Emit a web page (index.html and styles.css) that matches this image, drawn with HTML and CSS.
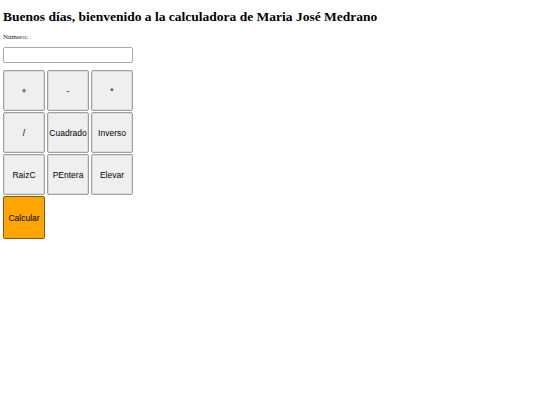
FILE: index.html
```html
<!DOCTYPE html>
<html lang="es">
<head>
<meta charset="utf-8">
<title>Calculadora</title>
<link rel="stylesheet" href="styles.css">
</head>
<body>
<h1 class="title">Buenos días, bienvenido a la calculadora de Maria José Medrano</h1>
<form class="calc">
  <label class="label" for="numero">Número:</label>
  <input class="input" id="numero" type="text">
  <div class="keys">
    <button type="button" class="key">+</button>
    <button type="button" class="key">-</button>
    <button type="button" class="key">*</button>
    <button type="button" class="key">/</button>
    <button type="button" class="key">Cuadrado</button>
    <button type="button" class="key">Inverso</button>
    <button type="button" class="key">RaizC</button>
    <button type="button" class="key">PEntera</button>
    <button type="button" class="key">Elevar</button>
    <button type="button" class="key key-calc">Calcular</button>
  </div>
</form>
</body>
</html>
```
FILE: styles.css
```css
html, body {
  margin: 0;
  padding: 0;
  background: #ffffff;
}
body {
  padding: 3px;
  font-family: "Liberation Serif", "Times New Roman", serif;
  color: #000;
}
.title {
  font-size: 13.5px;
  font-weight: bold;
  line-height: 16px;
  margin: 6px 0 8px 0;
}
.calc {
  display: flex;
  flex-direction: column;
  width: 130px;
}
.label {
  font-size: 7px;
  line-height: 8px;
  color: #222;
  margin-bottom: 6px;
}
.input {
  box-sizing: border-box;
  width: 130px;
  height: 16px;
  margin: 0 0 7px 0;
  padding: 0 2px;
  border: 1px solid #a9a9a9;
  border-radius: 2px;
  background: #fff;
}
.keys {
  display: grid;
  grid-template-columns: repeat(3, 42px);
  grid-auto-rows: 41px;
  column-gap: 2px;
  row-gap: 1px;
}
.key {
  box-sizing: border-box;
  margin: 0;
  padding: 0;
  font-family: "Liberation Sans", Arial, sans-serif;
  font-size: 8.5px;
  color: #000;
  background: #efefef;
  border: 1px solid #a0a0a0;
  border-radius: 2px;
  box-shadow: inset 0 0 0 1px #dcdcdc;
}
.key-calc {
  background: #ffa500;
  border-color: #7a5a20;
  box-shadow: none;
  height: 43px;
}
```
